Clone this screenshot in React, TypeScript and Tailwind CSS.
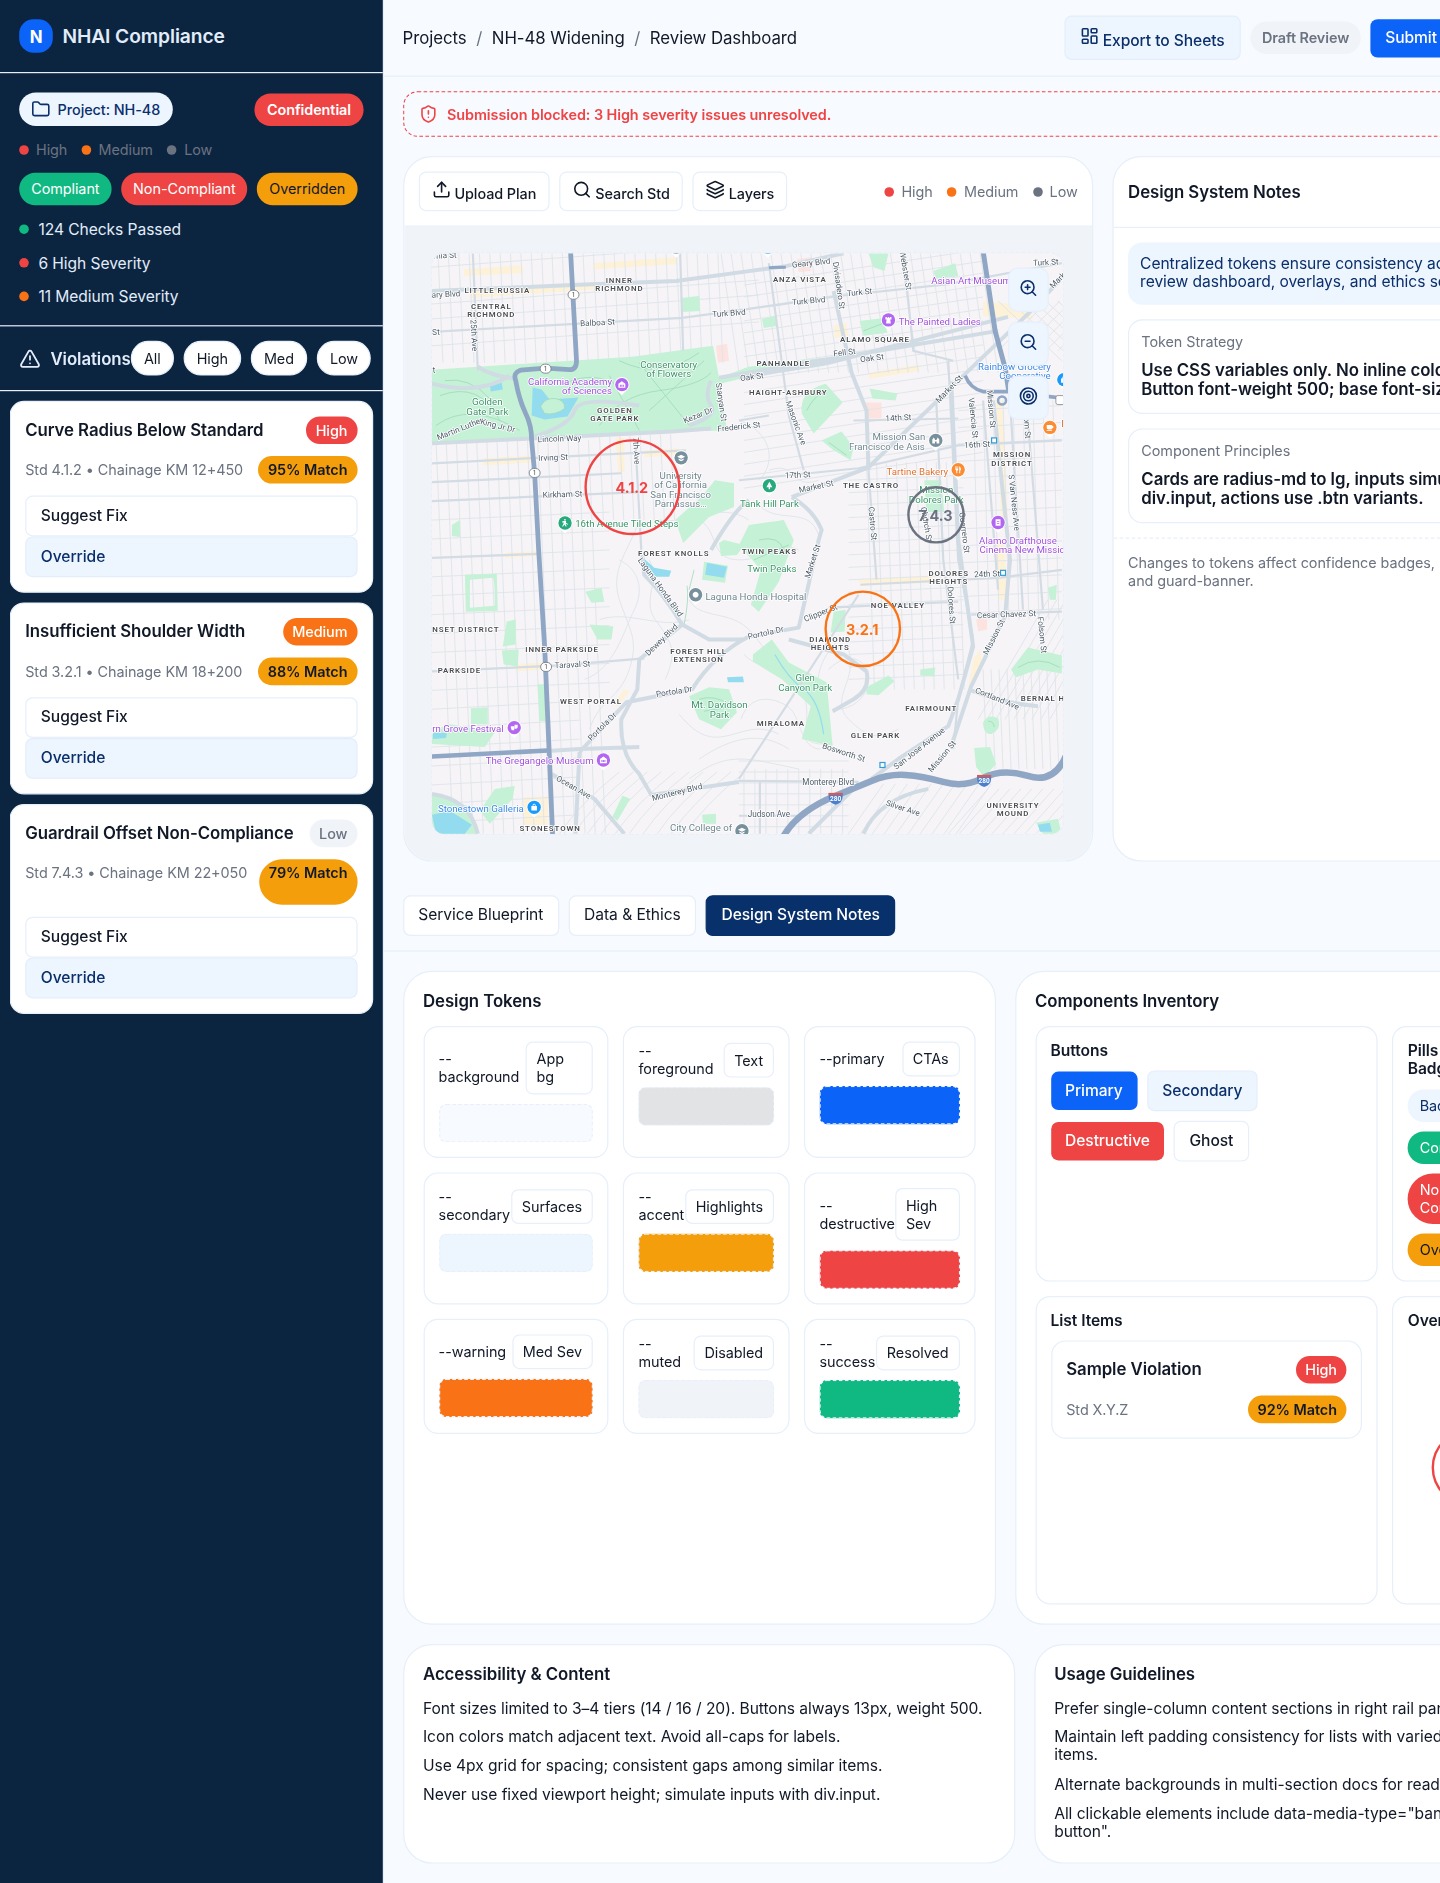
import type { ReactNode } from "react";
import {
  Folder,
  Layers,
  LayoutDashboard,
  Search,
  ShieldAlert,
  Target,
  TriangleAlert,
  Upload,
  ZoomIn,
  ZoomOut,
} from "lucide-react";

/* ---------- shared pieces ---------- */

const pillTones = {
  soft: "bg-[#edf5ff] text-[#0a2f6b]",
  success: "bg-[#10b981] text-white",
  danger: "bg-[#ef4444] text-white",
  warn: "bg-[#f59e0b] text-[#111827]",
};

function Pill({ tone, className = "", children }: { tone: keyof typeof pillTones; className?: string; children: ReactNode }) {
  return (
    <span className={`inline-flex items-center gap-1.5 rounded-full px-2.5 py-1.5 text-[12px] whitespace-nowrap ${pillTones[tone]} ${className}`}>
      {children}
    </span>
  );
}

const severityTones = {
  High: "bg-[#ef4444] text-white",
  Medium: "bg-[#f97316] text-white",
  Low: "bg-[#f0f4f9] text-[#6b7280]",
};

function Severity({ level }: { level: keyof typeof severityTones }) {
  return <span className={`rounded-full px-2 py-1 text-[12px] font-medium ${severityTones[level]}`}>{level}</span>;
}

function Match({ value, tall }: { value: string; tall?: boolean }) {
  return (
    <span className={`rounded-full bg-[#f59e0b] px-2 py-1 text-[12px] font-semibold whitespace-nowrap text-[#111827] ${tall ? "h-[38px]" : ""}`}>
      {value} Match
    </span>
  );
}

const buttonTones = {
  primary: "bg-[#0b63f8] text-white",
  destructive: "bg-[#ef4444] text-white",
  secondary: "border border-[#e4eefa] bg-[#edf5ff] text-[#0a2f6b]",
  ghost: "border border-[#e6effa] bg-white text-[#111827]",
  active: "border border-[#08306b] bg-[#08306b] text-white",
};

function Button({ tone, weight = "font-medium", children }: { tone: keyof typeof buttonTones; weight?: string; children: ReactNode }) {
  return (
    <button className={`rounded-md px-3 pt-2 pb-[9px] text-left text-[13px] leading-[15px] whitespace-nowrap ${weight} ${buttonTones[tone]}`}>
      {children}
    </button>
  );
}

function Legend() {
  const rows = [
    ["High", "bg-[#ef4444]"],
    ["Medium", "bg-[#f97316]"],
    ["Low", "bg-[#6b7280]"],
  ];
  return (
    <div className="flex shrink-0 gap-3 text-[12px] text-[#6b7280]">
      {rows.map(([name, dot]) => (
        <span key={name} className="flex items-center gap-1.5">
          <i className={`size-2 rounded-full ${dot}`} />
          {name}
        </span>
      ))}
    </div>
  );
}

/* ---------- sidebar ---------- */

const violations = [
  { title: "Curve Radius Below Standard", level: "High", meta: "Std 4.1.2 • Chainage KM 12+450", match: "95%" },
  { title: "Insufficient Shoulder Width", level: "Medium", meta: "Std 3.2.1 • Chainage KM 18+200", match: "88%" },
  { title: "Guardrail Offset Non-Compliance", level: "Low", meta: "Std 7.4.3 • Chainage KM 22+050", match: "79%", tall: true },
] as const;

function Sidebar() {
  return (
    <aside className="w-[319.500px] shrink-0 border-r border-[#e6effa] bg-[#0b2540] text-[#e2ecfa]">
      <div className="flex items-center gap-2 border-b border-[#e6effa] p-4">
        <div className="flex size-7 items-center justify-center rounded-xl bg-[#0b63f8] text-[14px] font-bold text-white">N</div>
        <div className="text-[16px] font-semibold">NHAI Compliance</div>
      </div>

      <div className="flex flex-col gap-3 border-b border-[#e6effa] p-4">
        <div className="flex items-center justify-between">
          <Pill tone="soft" className="font-medium">
            <Folder size={16} />
            Project: NH-48
          </Pill>
          <Pill tone="danger" className="font-semibold">Confidential</Pill>
        </div>
        <Legend />
        <div className="flex gap-2">
          <Pill tone="success">Compliant</Pill>
          <Pill tone="danger">Non-Compliant</Pill>
          <Pill tone="warn">Overridden</Pill>
        </div>
        {[
          ["124 Checks Passed", "bg-[#10b981]"],
          ["6 High Severity", "bg-[#ef4444]"],
          ["11 Medium Severity", "bg-[#f97316]"],
        ].map(([label, dot]) => (
          <div key={label} className="flex items-center gap-2 text-[13px]">
            <i className={`size-2 rounded-full ${dot}`} />
            {label}
          </div>
        ))}
      </div>

      <div className="flex items-center justify-between border-b border-[#e6effa] px-4 py-3">
        <div className="flex items-center gap-2 text-[14px] font-semibold">
          <TriangleAlert size={18} />
          Violations
        </div>
        <div className="flex gap-2">
          {["All", "High", "Med", "Low"].map((f) => (
            <button key={f} className="rounded-full border border-[#e6effa] bg-white px-2.5 py-1.5 text-[12px] text-[#111827]">
              {f}
            </button>
          ))}
        </div>
      </div>

      <div className="flex flex-col gap-2 p-2">
        {violations.map((v) => (
          <div key={v.title} className="flex flex-col gap-2.5 rounded-xl border border-[#e6effa] bg-white p-3">
            <div className="flex items-center justify-between">
              <span className="pb-px text-[14px] leading-[16px] font-semibold text-[#111827]">{v.title}</span>
              <Severity level={v.level} />
            </div>
            <div className="flex items-baseline justify-between whitespace-nowrap">
              <span className="text-[12px] text-[#6b7280]">{v.meta}</span>
              <Match value={v.match} tall={"tall" in v} />
            </div>
            <div className="flex flex-col">
              <Button tone="ghost">Suggest Fix</Button>
              <Button tone="secondary">Override</Button>
            </div>
          </div>
        ))}
      </div>
    </aside>
  );
}

/* ---------- map ---------- */

const range = (from: number, to: number, step: number) => {
  const out: number[] = [];
  for (let v = from; v <= to; v += step) out.push(v);
  return out;
};

const minorStreets = [
  ...range(438, 725, 10.4).map((x) => `M${x} 252L${x + 5} 362`),
  ...[266, 303, 318, 345].map((y) => `M432 ${y}L760 ${y - 24}`),
  ...range(436, 590, 10.2).map((x) => `M${x} 440L${x + 17} 835`),
  ...range(600, 680, 10.2).map((x) => `M${x} 434L${x + 4} 520`),
  ...range(482, 830, 19).map((y) => `M432 ${y}L${y < 700 ? 610 : 580} ${y - 8}`),
  ...range(722, 985, 10).map((x) => `M${x} 252L${x + 18} 372`),
  ...range(262, 470, 12).map((y) => `M745 ${y + 22}L985 ${y - 14}`),
  ...range(868, 960, 10).map((x) => `M${x} 462L${x + 8} 690`),
  ...range(480, 690, 12.5).map((y) => `M850 ${y}L965 ${y - 5}`),
  ...range(975, 1064, 10).map((x) => `M${x} 400L${x + 6} 620`),
  ...range(410, 620, 17).map((y) => `M960 ${y}L1064 ${y - 5}`),
  ...range(985, 1064, 8).map((x) => `M${x} 670L${x + 4} 770`),
  ...range(980, 1060, 9).map((x) => `M${x} 720L${x + 70} 600`),
  ...range(950, 1070, 11).map((x) => `M${x} 835L${x + 40} 790`),
  ...range(790, 900, 12).map((x) => `M${x + 60} 835L${x + 95} 785`),
  ...range(745, 850, 11).map((x) => `M${x} 770L${x} 835`),
  ...range(762, 830, 11).map((y) => `M740 ${y}L850 ${y}`),
  ...range(1000, 1060, 12).map((x) => `M${x} 300L${x + 64} 360`),
  ...range(1000, 1064, 12).map((x) => `M${x} 350L${x + 50} 300`),
  ...range(560, 690, 14).map((x) => `M${x} 835q20 -30 60 -62`),
  "M640 520c-10 30 -30 50 -20 80s20 40 10 70s-30 30 -40 60",
  "M620 560c20 10 25 30 15 50s-20 60 -50 70",
  "M650 560c12 20 -8 40 6 60s24 30 10 60",
  "M600 620c30 -10 60 10 90 0",
  "M700 520c20 10 10 40 40 40s40 -20 60 -10",
  "M690 600c10 20 40 10 60 30s20 40 50 40",
  "M745 655c20 20 50 10 60 40s-10 50 20 50",
  "M770 470c30 -10 20 20 50 10",
  "M760 505c20 20 50 0 60 30",
  "M742 720c10 -30 40 -20 50 -10s10 40 30 40",
  "M700 760c30 -20 60 -30 90 -10",
  "M690 780c40 -30 60 -20 110 -10",
  "M680 715c40 50 60 0 100 20",
  "M850 650c10 30 -20 50 0 70s30 20 50 10",
  "M840 640c-20 20 -30 50 -10 70",
  "M830 670c20 -20 40 -10 40 10s-20 30 -30 30",
  "M660 520c30 5 60 -20 90 0",
  "M740 420c30 10 40 40 20 60",
];

const mainStreets = [
  "M432 331L683 317L750 308L840 295L950 283L1064 262",
  "M473 252L478 370",
  "M681 252L684 350",
  "M432 463L687 450",
  "M432 482L622 473",
  "M432 501L640 492",
  "M636 440L642 550",
  "M432 558L540 554",
  "M432 672L560 666L645 659",
  "M770 262L790 415L805 470",
  "M740 420L770 415",
  "M905 252L915 350L955 360",
  "M950 360L960 560L975 640L960 700L955 750",
  "M938 400L945 560L960 680",
  "M870 470L878 580",
  "M740 480L860 468L960 445L1064 440",
  "M855 420L960 418",
  "M862 585L1000 578L1064 570",
  "M830 608L960 602",
  "M973 615L1064 612",
  "M985 400L1000 590",
  "M1012 400L1025 610",
  "M1030 420L1045 610",
  "M740 782L860 783",
  "M740 817L800 817",
  "M761 782L761 835",
  "M860 595L740 780",
];

const arterials = [
  "M432 290L573 284L677 280L750 270L787 265L845 252",
  "M432 443L673 431L712 428",
  "M720 377L790 365L1000 330",
  "M740 377L830 362L1010 316",
  "M835 290L853 372L868 410L870 470",
  "M712 380Q705 395 712 405T690 425",
  "M580 753L627 703L693 690Q715 655 750 637L800 628L820 540L823 530Q815 510 793 497",
  "M793 497L870 467L960 380L1030 313L1064 277",
  "M873 780L900 760L950 727L960 700L975 647L960 540L953 380",
  "M953 747L973 687L1007 617L1012 560L995 400",
  "M580 753L576 835",
  "M548 752L580 750L640 748",
  "M643 555L645 575Q665 595 683 625L710 640L745 640",
  "M683 625L640 660L638 690L622 720Q620 755 640 775L652 796L740 783",
  "M552 775L595 800L625 835",
  "M865 835Q880 800 930 790",
  "M860 785L810 835",
  "M834 712L855 700Q872 690 868 672L845 655L790 640",
  "M970 690Q1010 705 1040 707",
  "M432 383Q480 395 510 375",
  "M478 366Q490 375 515 378",
  "M535 436Q570 425 575 410T640 405",
  "M432 795Q470 800 478 835",
  "M750 500Q735 510 712 550",
];

const parks = [
  "M432 369L633 356L714 345L720 377L750 366L825 357L826 365L750 376L721 383L728 430L677 431L533 437L432 443Z",
  "M682 297L700 295L701 310L683 311Z",
  "M676 520L702 497L716 480L735 483L735 507L710 517L684 543Z",
  "M803 413Q800 390 827 383L844 402L830 417L815 433Z",
  "M823 440L843 431L855 447L852 460L835 450Z",
  "M861 320L885 317L889 332L865 335Z",
  "M870 252L890 252L886 270L875 266Z",
  "M935 270L957 262L960 275L938 278Z",
  "M871 388L899 393L897 400L874 398Z",
  "M926 480L943 480L946 512L928 512Z",
  "M763 318L777 315L778 325L765 327Z",
  "M740 545L750 525L785 520L795 540L780 582L760 612L752 605L762 570Z",
  "M754 655L773 640L790 663L828 683L834 747L803 740L812 707L783 680L754 662Z",
  "M690 697L710 688L730 690L738 713L722 730L700 720Z",
  "M586 592L602 588L605 602L592 603Z",
  "M590 625L614 627L612 640L598 640Z",
  "M507 622L516 620L516 645L503 647Z",
  "M502 651L519 650L518 667L504 665Z",
  "M471 709L488 708L488 725L471 725Z",
  "M432 735L450 725L495 733L485 748L432 745Z",
  "M432 795L470 808L478 835L432 835Z",
  "M495 790L515 787L513 800L490 825L480 812Z",
  "M623 797L631 800L618 822L613 818Z",
  "M720 543L725 540L745 545L738 555L722 556Z",
  "M705 562L729 566L726 583L703 580Z",
  "M835 612L847 610L846 632L832 633Z",
  "M868 688L890 676L896 682L880 696L868 695Z",
  "M922 670L937 668L936 677L922 676Z",
  "M1013 670L1030 648L1064 656L1064 674L1040 670L1018 678Z",
  "M985 723Q990 714 1000 719Q1004 730 993 735Q985 735 985 723Z",
  "M976 749L992 748L998 765L986 778L978 768Z",
  "M703 816L717 815L717 825L704 825Z",
  "M538 685L545 685L546 722L540 722Z",
  "M452 525L460 520L460 537L452 536Z",
  "M1050 588L1059 585L1058 600L1052 600Z",
  "M1038 824L1060 820L1064 835L1045 835Z",
];

const lakes = [
  "M533 387L542 389L550 399L579 397L568 416L545 419L532 415Z",
  "M490 385L502 382L503 389L491 391Z",
  "M643 557L655 568L672 571L670 577L657 577L645 566Z",
  "M708 563L728 567L725 578L706 575Z",
  "M432 816L450 812L472 826L465 835L436 835Z",
  "M728 678L744 677L745 683L729 683Z",
  "M1040 826L1052 824L1054 833L1042 833Z",
  "M433 733L447 734L446 739L433 740Z",
];

const shops = [
  "M464 268L523 264L523 272L464 275Z",
  "M594 262L677 256L678 263L594 268Z",
  "M470 291L600 283L600 288L470 297Z",
  "M483 458L535 455L535 462L483 465Z",
  "M616 437L625 437L625 472L619 472Z",
  "M645 450L680 448L680 455L645 457Z",
  "M505 553L537 551L537 556L505 558Z",
  "M516 665L545 663L545 670L516 672Z",
  "M870 372L920 364L921 370L871 378Z",
  "M835 325L848 322L850 335L836 337Z",
  "M860 580L935 576L935 583L862 586Z",
  "M998 400L1004 400L1010 520L1003 520Z",
  "M996 540L1006 540L1010 600L1001 600Z",
  "M615 705L625 690L630 692L618 708Z",
  "M524 798L548 798L548 826L524 826Z",
  "M975 660L982 650L984 668L970 690Z",
  "M985 300L1030 305L1035 318L985 315Z",
];

const civic = ["M717 345L728 343L730 360L719 362Z", "M867 402L883 402L883 418L868 418Z", "M978 620L989 617L989 630L980 632Z", "M798 258L812 256L812 270L800 271Z"];

type Label = [number, number, string, number?];

const districts: Label[] = [
  [497.5, 292, "LITTLE RUSSIA"], [491.5, 308, "CENTRAL"], [491.5, 316, "RICHMOND"], [620, 281.5, "INNER"], [620, 290, "RICHMOND"],
  [615.5, 412, "GOLDEN"], [615.5, 420.3, "GATE PARK"], [801, 280.5, "ANZA VISTA"], [876.5, 341, "ALAMO SQUARE"], [784.5, 365.5, "PANHANDLE"],
  [789.5, 394, "HAIGHT-ASHBURY"], [872.5, 488, "THE CASTRO"], [1014, 457, "MISSION"], [1014, 465.3, "DISTRICT"], [674.5, 556.5, "FOREST KNOLLS"],
  [770.5, 554, "TWIN PEAKS"], [466, 632, "NSET DISTRICT"], [562.5, 652.5, "INNER PARKSIDE"], [459.5, 674, "PARKSIDE"], [591.5, 704.5, "WEST PORTAL"],
  [699.5, 654.5, "FOREST HILL"], [699.5, 662.8, "EXTENSION"], [550.5, 832.5, "STONESTOWN"], [950.5, 576, "DOLORES"], [950.5, 584.3, "HEIGHTS"],
  [899.5, 608.5, "NOE VALLEY"], [831.5, 642, "DIAMOND"], [831.5, 650.3, "HEIGHTS"], [933, 712, "FAIRMOUNT"], [782, 727.3, "MIRALOMA"],
  [877, 739, "GLEN PARK"], [1045, 702, "BERNAL H"], [1015, 809.3, "UNIVERSITY"], [1015, 817.6, "MOUND"],
];

const streets: Label[] = [
  [446, 296, "ary Blvd", -3], [445, 257, "rnia St", -3], [436, 334, "St", -3], [434, 372, "t", -3], [598, 324.5, "Balboa St", -3], [474, 337, "25th Ave", 87],
  [460, 431, "Martin Luther", -22], [498, 428, "King Jr Dr", 14], [560, 441, "Lincoln Way", -2], [553.5, 460, "Irving St", -2], [563, 497, "Kirkham St", -2], [637, 453, "7th Ave", 87],
  [699, 417.5, "Kezar Dr", -22], [722, 404, "Stanyan St", 82], [740, 429, "Frederick St", -6], [730, 315, "Turk Blvd", -4], [753, 379, "Oak St", -7],
  [812.5, 264.5, "Geary Blvd", -6], [840, 287, "Divisadero St", 82], [861, 294, "Turk St", -6], [810, 302.5, "Turk Blvd", -5], [907, 272, "Webster St", 80],
  [1048, 264, "Turk St", -3], [1060, 282, "Mark", -45], [846, 354.5, "Fell St", -7], [873.5, 360, "Oak St", -7], [951, 391, "Market St", -46],
  [900, 420, "14th St", -3], [797, 425, "Masonic Ave", 70], [799, 477.5, "17th St", -2], [817.5, 489, "Market St", -12], [979, 447, "16th St", -3],
  [975, 420, "Valencia St", 84], [993, 411, "Mission St", 85], [1029, 430, "om St", 87], [1016, 505, "S Van Ness Ave", 84], [874, 526, "Castro St", 85],
  [928, 527, "Church St", 80], [966, 535, "Guerrero St", 83], [661, 590, "Laguna Honda Blvd", 54], [662.5, 643, "Dewey Blvd", -44], [573, 668, "Taraval St", -3],
  [675, 695, "Portola Dr", -9], [603, 730, "Portola Dr", -45], [574, 791, "Ocean Ave", 30], [678, 796, "Monterey Blvd", -14], [814, 564, "Market St", -72],
  [767, 636, "Portola Dr", -13], [822, 616, "Clipper St", -22], [989, 577, "24th St", -2], [1008.5, 617.5, "Cesar Chavez St", -2], [953, 608, "Dolores St", 86],
  [1044, 638, "Folsom St", 84], [996, 640, "Mission St", -63], [999, 702, "Cortland Ave", 22], [845, 756, "Bosworth St", 18], [921, 752, "San Jose Avenue", -38],
  [944, 760, "Mission St", -50], [829.5, 786, "Monterey Blvd"], [770, 818.5, "Judson Ave"], [904.5, 812, "Silver Ave", 18],
];

const parkNames: Label[] = [
  [669.5, 367, "Conservatory"], [669.5, 376.6, "of Flowers"], [487.5, 404.5, "Golden"], [487.5, 414, "Gate Park"], [627.5, 527, "16th Avenue Tiled Steps"],
  [770.5, 506.5, "Tank Hill Park"], [938, 493, "Mission"], [938, 502.6, "Dolores Park"], [773, 572, "Twin Peaks"], [806.5, 682, "Glen"], [806.5, 691.6, "Canyon Park"],
  [720.5, 709, "Mt. Davidson"], [720.5, 718.6, "Park"],
];
const museums: Label[] = [
  [570.5, 384, "California Academy"], [587.5, 393.6, "of Sciences"], [973, 283, "Asian Art Museum"], [941.5, 324, "The Painted Ladies"], [1020, 543.6, "Alamo Drafthouse"],
  [1027, 553.2, "Cinema New Mission"], [468, 733, "rn Grove Festival"], [540, 765.5, "The Gregangelo Museum"],
];
const campuses: Label[] = [
  [681.5, 478.6, "University"], [681.5, 488.2, "of California"], [681.5, 497.8, "San Francisco"], [681.5, 507.4, "Parnassus…"], [900.5, 440, "Mission San"],
  [888.5, 449.6, "Francisco de Asis"], [757, 600, "Laguna Honda Hospital"], [702, 832, "City College of"],
];
const stores: Label[] = [[1016.5, 369, "Rainbow Grocery"], [1027, 378.6, "Cooperative"], [481, 813.3, "Stonestown Galleria"]];
const foods: Label[] = [[919, 474.5, "Tartine Bakery"], [1066, 427, "F"]];

function Labels({ items, className }: { items: Label[]; className: string }) {
  return (
    <g className={className} textAnchor="middle" stroke="#ffffff" strokeWidth="1.6" strokeLinejoin="round" paintOrder="stroke">
      {items.map(([x, y, text, turn], i) => (
        <text key={i} x={x} y={y} transform={turn ? `rotate(${turn} ${x} ${y - 2.5})` : undefined}>
          {text}
        </text>
      ))}
    </g>
  );
}

function Pin({ x, y, fill, glyph }: { x: number; y: number; fill: string; glyph: string }) {
  return (
    <g transform={`translate(${x} ${y})`}>
      <path d="M-7.6 0a7.6 7.6 0 1 1 15.2 0c0 4-4 6.500-7.600 10.600C-3.600 6.500-7.600 4-7.600 0Z" fill="#fff" />
      <circle r="6.7" fill={fill} />
      <path d={glyph} fill="#fff" />
    </g>
  );
}

const museumGlyph = "M-3.500-1L0-3.500L3.500-1V3.200H-3.500ZM-2 0V2H-1V0ZM-.5 0V2H.5V0ZM1 0V2H2V0Z";
const treeGlyph = "M0-4L3 1.500H.7V3.500H-.7V1.500H-3Z";
const rookGlyph = "M-3-3H-1.500V-2H-.7V-3H.7V-2H1.500V-3H3V-.5H1.800L2.400 3.500H-2.400L-1.800-.5H-3Z";
const capGlyph = "M-4-1L0-3L4-1L0 1ZM-2.500 .8L0 2L2.500 .8V2.200L0 3.400L-2.500 2.200Z";
const bagGlyph = "M-2.800-1.200H-1.500V-2a1.500 1.500 0 0 1 3 0v.8H2.800V3.200H-2.800ZM-.8-1.200H.8V-2a.8 .8 0 0 0-1.600 0Z";
const cupGlyph = "M-3.200-2.500H2.200V-1.800a1.400 1.400 0 0 1 0 2.800A2 2 0 0 1 1 2H-1.500A2 2 0 0 1-3.200 .5ZM-3.200 2.600H2.200V3.300H-3.200Z";
const forkGlyph = "M-2.800-3.500H-2.200V-1H-1.700V-3.500H-1.100V-1H-.6V-3.500H0V0L-.9 1V3.500H-1.900V1L-2.800 0ZM1-3.500Q2.800-3 2.800 .5H2V3.500H1Z";
const masksGlyph = "M-3.500-1.500H0V2.500H-2.500Q-3.500 1-3.500-1.500ZM.3-3H3.500V-.5Q3 1 1.500 1.200H.3Z";
const hikeGlyph = "M-1-3.800H.8V-2.600H-1ZM-2.600-2H1V0L3 1V1.800L.5 .8L1.600 3.600H.6L-.6 1.400L-2 3.600H-3L-1.600 .6V-1L-2.600 0Z";
const ringGlyph = "M0-3a3 3 0 1 0 .01 0Z";
const filmGlyph = "M-2.500-3.200H2.500V3.200H-2.500ZM-1.200-1.500V-.8H1.200V-1.500ZM-1.200 .8V1.500H1.200V.8Z";
const missionGlyph = "M-3.500 3V-1L-2-3L-.8-1V-.3H.8V-1L2-3L3.500-1V3H.8V1H-.8V3Z";

function CityMap() {
  return (
    <svg className="block size-full font-['Roboto',sans-serif] tracking-[0px]" viewBox="432 252 633 583" preserveAspectRatio="none">
      <rect x="430" y="250" width="640" height="590" fill="#f6f4f6" />
      <g fill="#fdf1d8">{shops.map((d) => <path key={d} d={d} />)}</g>
      <g fill="#fde3df">{civic.map((d) => <path key={d} d={d} />)}</g>
      <path d={minorStreets.join("")} fill="none" stroke="#dde4ea" strokeWidth="0.9" />
      <g fill="#c5f1d6">{parks.map((d) => <path key={d} d={d} />)}</g>
      <path d="M465 575L497 574L498 611L466 612ZM470 580L493 578Q495 580 495 606L470 608Z" fill="#c5f1d6" fillRule="evenodd" />
      <g fill="none" stroke="#9fd9ba" strokeWidth="0.8">
        <path d="M620 360Q660 380 700 352M610 375L640 430M640 362L690 425M650 410L705 360M600 425Q620 395 660 390T712 372M440 395Q480 380 500 420M436 425Q470 400 520 430M560 385Q590 370 612 382M445 380Q470 376 490 398M540 405Q555 395 565 408Q555 415 540 412Z" />
        <path d="M808 410Q815 395 828 390M865 330L886 322M1020 668Q1040 655 1062 668M990 722Q996 722 996 728M830 442L848 455M760 540Q780 535 785 550M755 560L790 545" />
        <path d="M700 700Q715 695 730 705M705 712L728 708M688 586Q690 600 685 625M695 570L690 590" />
      </g>
      <g fill="#93dcef">{lakes.map((d) => <path key={d} d={d} />)}</g>
      <path d="M541 406Q545 397 556 398Q566 400 565 408Q556 415 545 413Z" fill="#c5f1d6" stroke="#9fd9ba" strokeWidth="0.8" />
      <path d="M776 655Q790 680 805 690T825 735" fill="none" stroke="#93dcef" strokeWidth="1.2" />
      <path d={mainStreets.join("")} fill="none" stroke="#d3dce4" strokeWidth="2.2" />
      <path d={arterials.join("")} fill="none" stroke="#d1dbe4" strokeWidth="4" strokeLinejoin="round" />
      <g fill="none" stroke="#8fa6c5" strokeLinejoin="round">
        <path d="M571 250L573 287L577 360Q577 369 570 369L546 367.500L521 369.500Q513 372 516 380Q519 398 526 413Q532 425 532 440L535 473L539 550L545 647L549 740L553 837" strokeWidth="4.8" />
        <path d="M430 757.500L548 751.500" strokeWidth="4.600" />
        <path d="M785 837Q800 812 837 797L873 782Q890 775 907 776T945 783T985 779T1030 777T1068 757" strokeWidth="6.500" />
        <path d="M985 250L997 330L1007 367L1011 392" strokeWidth="5" />
        <path d="M967 375Q972 388 985 391L1010 391L1068 398" strokeWidth="3.600" />
        <path d="M770 266.500L787 266" strokeWidth="3" />
        <circle cx="1004" cy="400" r="4" strokeWidth="2.500" />
      </g>
      <Labels items={streets} className="fill-[#4d5b68] text-[8.200px]" />
      <Labels items={districts} className="fill-[#4c4d52] text-[7.900px] font-semibold tracking-[0.900px]" />
      <Labels items={parkNames} className="fill-[#3a9468] text-[9.700px]" />
      <Labels items={museums} className="fill-[#a050dc] text-[9.700px]" />
      <Labels items={campuses} className="fill-[#6f8790] text-[9.700px]" />
      <Labels items={stores} className="fill-[#3a88e8] text-[9.700px]" />
      <Labels items={foods} className="fill-[#e07030] text-[9.700px]" />
      {[[574, 293.7], [546, 368], [535, 472.7], [546.5, 667.5]].map(([x, y]) => (
        <g key={y}>
          <rect x={x - 5.5} y={y - 4.5} width="11" height="9" rx="4.5" fill="#fff" stroke="#77808a" strokeWidth="0.900" />
          <text x={x} y={y + 2.300} textAnchor="middle" className="fill-[#444] text-[6.500px]">1</text>
        </g>
      ))}
      {[[837, 799], [986, 781]].map(([x, y]) => (
        <g key={x}>
          <path d={`M${x - 7} ${y - 5}h14v4q0 6-7 8q-7-2-7-8Z`} fill="#4a7fd0" />
          <path d={`M${x - 7} ${y - 5}h14v2.200h-14Z`} fill="#e2574c" />
          <text x={x} y={y + 3.200} textAnchor="middle" className="fill-white text-[6.500px] font-bold">280</text>
        </g>
      ))}
      {[[996, 440], [1005, 573], [884, 766]].map(([x, y]) => (
        <rect key={x} x={x - 2.500} y={y - 2.500} width="5" height="5" fill="#fff" stroke="#2f9bd8" strokeWidth="1.200" />
      ))}
      <rect x="1058" y="395" width="12" height="9" rx="2" fill="#fff" stroke="#888" strokeWidth="0.800" />
      <Pin x={622.500} y={384} fill="#b266f2" glyph={museumGlyph} />
      <Pin x={890} y={319} fill="#b266f2" glyph={rookGlyph} />
      <Pin x={1000} y={522.500} fill="#b266f2" glyph={filmGlyph} />
      <Pin x={514.500} y={728.500} fill="#b266f2" glyph={masksGlyph} />
      <Pin x={604} y={761} fill="#b266f2" glyph={museumGlyph} />
      <Pin x={682} y={457.500} fill="#78909c" glyph={capGlyph} />
      <Pin x={937.500} y={440} fill="#78909c" glyph={missionGlyph} />
      <Pin x={696.500} y={595} fill="#78909c" glyph={ringGlyph} />
      <Pin x={743} y={832} fill="#78909c" glyph={capGlyph} />
      <Pin x={565.500} y={523} fill="#26a97c" glyph={hikeGlyph} />
      <Pin x={770.500} y={485.500} fill="#26a97c" glyph={treeGlyph} />
      <Pin x={534.500} y={808.500} fill="#1a9bfb" glyph={bagGlyph} />
      <Pin x={1066} y={379} fill="#1a9bfb" glyph={bagGlyph} />
      <Pin x={960} y={469.500} fill="#fb8c33" glyph={forkGlyph} />
      <Pin x={1052} y={427} fill="#fb8c33" glyph={cupGlyph} />
      <Pin x={677} y={246} fill="#78909c" glyph={ringGlyph} />
      <Pin x={769} y={246} fill="#1a9bfb" glyph={ringGlyph} />
    </svg>
  );
}

function MapCard() {
  return (
    <section className="w-[575.600px] shrink-0 overflow-hidden rounded-3xl border border-[#e6effa] bg-white">
      <div className="flex h-[58px] items-center justify-between border-b border-[#e6effa] px-3">
        <div className="flex gap-2">
          {[
            { label: "Upload Plan", Icon: Upload },
            { label: "Search Std", Icon: Search },
            { label: "Layers", Icon: Layers },
          ].map(({ label, Icon }) => (
            <button key={label} className="rounded-md border border-[#e6effa] bg-white px-2.5 py-1.5 text-[12px] font-medium whitespace-nowrap text-[#111827]">
              <Icon size={16} className="inline align-baseline" /> {label}
            </button>
          ))}
        </div>
        <Legend />
      </div>
      <div className="relative flex h-[528px] items-center justify-center bg-[#f0f4f9]">
        <div className="h-[92%] w-[92%] overflow-hidden rounded-xl border border-dashed border-[#e6effa]">
          <CityMap />
        </div>
        <div className="absolute top-[177px] left-[150px] flex size-20 items-center justify-center rounded-full border-2 border-[#ef4444] text-[12px] font-bold text-[#ef4444]">4.1.2</div>
        <div className="absolute top-[303px] left-[350px] flex size-16 items-center justify-center rounded-full border-2 border-[#f97316] text-[12px] font-bold text-[#f97316]">3.2.1</div>
        <div className="absolute top-[216px] left-[419px] flex size-12 items-center justify-center rounded-full border-2 border-[#6b7280] text-[12px] font-bold text-[#6b7280]">7.4.3</div>
        <div className="absolute top-[34px] right-[36px] flex flex-col gap-2">
          {[ZoomIn, ZoomOut, Target].map((Icon, i) => (
            <button key={i} className="rounded-lg border border-[#e6effa] bg-[#edf5ff] px-2 py-2 text-[13px] text-[#0a2f6b]">
              <Icon size={16} className="inline align-baseline" />
            </button>
          ))}
        </div>
      </div>
    </section>
  );
}

/* ---------- notes rail ---------- */

function Lines({ items }: { items: string[] }) {
  return (
    <>
      {items.map((t) => (
        <span key={t} className="block whitespace-nowrap">{t}</span>
      ))}
    </>
  );
}

function CardTitle({ children }: { children: ReactNode }) {
  return <h2 className="mb-3 pb-px text-[14px] leading-[16px] font-semibold">{children}</h2>;
}

function NotesCard() {
  return (
    <section className="w-[444px] shrink-0 rounded-3xl border border-[#e6effa] bg-white">
      <div className="flex h-[59px] items-center border-b border-[#e6effa] px-3 pb-px text-[14px] leading-[16px] font-semibold">Design System Notes</div>
      <div className="flex flex-col gap-3 p-3">
        <div className="rounded-xl bg-[#edf5ff] px-2.5 pt-2.5 pb-3 text-[13px] leading-[15px] text-[#0a2f6b]">
          <Lines items={["Centralized tokens ensure consistency across", "review dashboard, overlays, and ethics screens."]} />
        </div>
        {[
          { label: "Token Strategy", lines: ["Use CSS variables only. No inline colors.", "Button font-weight 500; base font-size 14."] },
          { label: "Component Principles", lines: ["Cards are radius-md to lg, inputs simulated as", "div.input, actions use .btn variants."] },
        ].map(({ label, lines }) => (
          <div key={label} className="rounded-xl border border-[#e6effa] p-2.5">
            <div className="mb-2 text-[12px] text-[#6b7280]">{label}</div>
            <div className="pb-0.5 text-[14px] leading-[16px] font-semibold">
              <Lines items={lines} />
            </div>
          </div>
        ))}
      </div>
      <div className="border-t border-dashed border-[#e6effa] p-3 text-[12px] text-[#6b7280]">
        <Lines items={["Changes to tokens affect confidence badges, pills,", "and guard-banner."]} />
      </div>
    </section>
  );
}

/* ---------- lower panel ---------- */

const tokens = [
  { name: ["--", "background"], use: ["App", "bg"], width: "w-[56px]", fill: "bg-[#f7faff]" },
  { name: ["--", "foreground"], use: ["Text"], width: "", fill: "bg-[#e2e3e5]" },
  { name: ["--primary"], use: ["CTAs"], width: "", fill: "bg-[#0b63f8]" },
  { name: ["--", "secondary"], use: ["Surfaces"], width: "", fill: "bg-[#edf5ff]" },
  { name: ["--", "accent"], use: ["Highlights"], width: "", fill: "bg-[#f59e0b]" },
  { name: ["--", "destructive"], use: ["High", "Sev"], width: "w-[53.600px]", fill: "bg-[#ef4444]" },
  { name: ["--warning"], use: ["Med Sev"], width: "", fill: "bg-[#f97316]" },
  { name: ["--", "muted"], use: ["Disabled"], width: "", fill: "bg-[#f0f4f9]" },
  { name: ["--", "success"], use: ["Resolved"], width: "", fill: "bg-[#10b981]" },
];

function TokensCard() {
  return (
    <section className="w-[494px] shrink-0 rounded-3xl border border-[#e6effa] bg-white p-4">
      <CardTitle>Design Tokens</CardTitle>
      <div className="grid grid-cols-[154.600px_138.800px_1fr] gap-3">
        {tokens.map((t) => (
          <div key={t.fill} className="rounded-xl border border-[#e6effa] p-3 text-[12px]">
            <div className="mb-2 flex items-center justify-between">
              <div className="w-0 grow">
                <Lines items={t.name} />
              </div>
              <div className={`shrink-0 rounded-md border border-[#e6effa] bg-white px-2 py-1.5 ${t.width}`}>
                <Lines items={t.use} />
              </div>
            </div>
            <div className={`h-8 rounded-md border border-dashed border-[#e6effa] ${t.fill}`} />
          </div>
        ))}
      </div>
    </section>
  );
}

function InventoryCard() {
  const box = "rounded-xl border border-[#e6effa] p-3";
  const heading = "mb-2 pb-px text-[13px] leading-[15px] font-semibold";
  return (
    <section className="w-[526px] shrink-0 rounded-3xl border border-[#e6effa] bg-white p-4">
      <CardTitle>Components Inventory</CardTitle>
      <div className="grid grid-cols-[285.600px_1fr] grid-rows-[213px_257px] gap-3">
        <div className={box}>
          <h3 className={heading}>Buttons</h3>
          <div className="flex flex-wrap items-center gap-2">
            <Button tone="primary">Primary</Button>
            <Button tone="secondary">Secondary</Button>
            <Button tone="destructive">Destructive</Button>
            <Button tone="ghost">Ghost</Button>
          </div>
        </div>
        <div className={box}>
          <h3 className={`${heading} h-8`}>
            <Lines items={["Pills &", "Badges"]} />
          </h3>
          <div className="flex flex-col items-start gap-2">
            <Pill tone="soft">Badge</Pill>
            <Pill tone="success">Compliant</Pill>
            <Pill tone="danger">
              <span>
                <Lines items={["Non-", "Compliant"]} />
              </span>
            </Pill>
            <Pill tone="warn">Overridden</Pill>
          </div>
        </div>
        <div className={box}>
          <h3 className={heading}>List Items</h3>
          <div className="flex flex-col gap-2.5 rounded-xl border border-[#e6effa] p-3">
            <div className="flex items-center justify-between">
              <span className="pb-px text-[14px] leading-[16px] font-semibold">Sample Violation</span>
              <Severity level="High" />
            </div>
            <div className="flex items-center justify-between">
              <span className="text-[12px] text-[#6b7280]">Std X.Y.Z</span>
              <Match value="92%" />
            </div>
          </div>
        </div>
        <div className={`${box} flex flex-col`}>
          <h3 className={heading}>Overlay</h3>
          <div className="flex grow items-center pt-1 pl-5">
            <div className="flex size-16 items-center justify-center rounded-full border-2 border-[#ef4444] text-[12px] font-bold text-[#ef4444]">4.1.2</div>
          </div>
        </div>
      </div>
    </section>
  );
}

function TextCard({ title, rows }: { title: string; rows: string[][] }) {
  return (
    <section className="w-[510px] shrink-0 rounded-3xl border border-[#e6effa] bg-white p-4">
      <CardTitle>{title}</CardTitle>
      <div className="flex flex-col gap-2 text-[13px] leading-[15px]">
        {rows.map((lines) => (
          <p key={lines[0]} className={lines.length > 1 ? "pb-0.5" : "pb-px"}>
            <Lines items={lines} />
          </p>
        ))}
      </div>
    </section>
  );
}

/* ---------- page ---------- */

export default function App() {
  return (
    <div className="h-[1883px] w-[1440px] overflow-hidden bg-[#f7faff]">
      <div className="flex h-[1570px] w-[1200px] origin-top-left scale-[1.2] overflow-hidden font-['Inter',sans-serif] leading-[normal] tracking-[-0.055px] text-[#111827]">
        <Sidebar />
        <main className="w-[1068px] shrink-0">
          <header className="flex h-16 items-center border-b border-[#e6effa] px-4">
            <nav className="flex w-[551px] shrink-0 gap-2 text-[14px]">
              <span>Projects</span>
              <span className="text-[#6b7280]">/</span>
              <span>NH-48 Widening</span>
              <span className="text-[#6b7280]">/</span>
              <span>Review Dashboard</span>
            </nav>
            <div className="flex shrink-0 items-center gap-2">
              <button className="rounded-md border border-[#e4eefa] bg-[#edf5ff] px-3 py-2 text-[13px] font-medium whitespace-nowrap text-[#0a2f6b]">
                <LayoutDashboard size={16} className="inline align-baseline" /> Export to Sheets
              </button>
              <span className="rounded-full bg-[#f0f4f9] px-2.5 py-1.5 text-[12px] font-semibold whitespace-nowrap text-[#6b7280]">Draft Review</span>
              <Button tone="primary">Submit Review</Button>
            </div>
          </header>

          <div className="mx-4 mt-3 flex items-center gap-2 rounded-xl border border-dashed border-[#ef4444] px-3 py-2.5 text-[12px] font-semibold text-[#ef4444]">
            <ShieldAlert size={16} />
            Submission blocked: 3 High severity issues unresolved.
          </div>

          <div className="flex gap-4 p-4">
            <MapCard />
            <NotesCard />
          </div>

          <div className="flex gap-2 border-b border-[#e6effa] px-4 py-3">
            <Button tone="ghost" weight="font-normal">Service Blueprint</Button>
            <Button tone="ghost" weight="font-normal">Data &amp; Ethics</Button>
            <Button tone="active">Design System Notes</Button>
          </div>

          <div className="flex flex-col gap-4 p-4">
            <div className="flex gap-4">
              <TokensCard />
              <InventoryCard />
            </div>
            <div className="flex gap-4">
              <TextCard
                title="Accessibility & Content"
                rows={[
                  ["Font sizes limited to 3–4 tiers (14 / 16 / 20). Buttons always 13px, weight 500."],
                  ["Icon colors match adjacent text. Avoid all-caps for labels."],
                  ["Use 4px grid for spacing; consistent gaps among similar items."],
                  ["Never use fixed viewport height; simulate inputs with div.input."],
                ]}
              />
              <TextCard
                title="Usage Guidelines"
                rows={[
                  ["Prefer single-column content sections in right rail panels."],
                  ["Maintain left padding consistency for lists with varied", "items."],
                  ["Alternate backgrounds in multi-section docs for readability."],
                  ['All clickable elements include data-media-type="banani-', 'button".'],
                ]}
              />
            </div>
          </div>
        </main>
      </div>
    </div>
  );
}
